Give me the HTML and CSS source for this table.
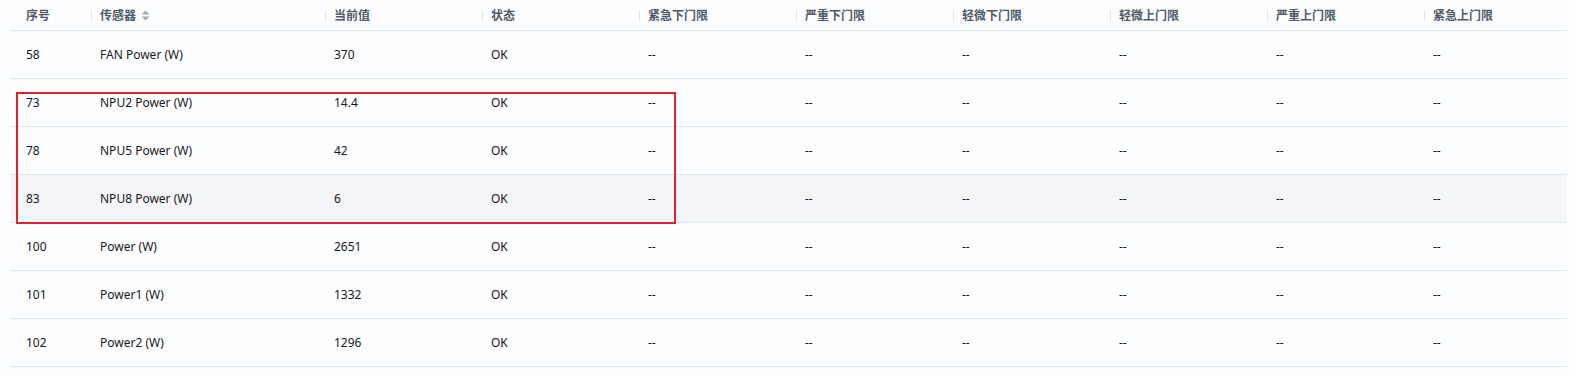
FILE: index.html
```html
<!DOCTYPE html>
<html>
<head>
<meta charset="utf-8">
<link rel="stylesheet" href="styles.css">
</head>
<body>
<div class="wrap">
<table class="grid">
<colgroup>
<col class="c-idx"><col class="c-name"><col class="c-std"><col class="c-std"><col class="c-std"><col class="c-std"><col class="c-std"><col class="c-std"><col class="c-std"><col class="c-last">
</colgroup>
<thead>
<tr>
<th class="first">序号</th>
<th><span class="sep"></span>传感器<svg class="sort" width="9" height="11" viewBox="0 0 9 11"><path d="M4.5 0.5 L8.5 4.5 H0.5 Z" fill="#a5acb7"/><path d="M4.5 10.5 L8.5 6.5 H0.5 Z" fill="#a5acb7"/></svg></th>
<th><span class="sep"></span>当前值</th>
<th><span class="sep"></span>状态</th>
<th><span class="sep"></span>紧急下门限</th>
<th><span class="sep"></span>严重下门限</th>
<th><span class="sep"></span>轻微下门限</th>
<th><span class="sep"></span>轻微上门限</th>
<th><span class="sep"></span>严重上门限</th>
<th><span class="sep"></span>紧急上门限</th>
</tr>
</thead>
<tbody>
<tr><td class="first">58</td><td>FAN Power (W)</td><td>370</td><td>OK</td><td>--</td><td>--</td><td>--</td><td>--</td><td>--</td><td>--</td></tr>
<tr><td class="first">73</td><td>NPU2 Power (W)</td><td>14.4</td><td>OK</td><td>--</td><td>--</td><td>--</td><td>--</td><td>--</td><td>--</td></tr>
<tr><td class="first">78</td><td>NPU5 Power (W)</td><td>42</td><td>OK</td><td>--</td><td>--</td><td>--</td><td>--</td><td>--</td><td>--</td></tr>
<tr class="hover"><td class="first">83</td><td>NPU8 Power (W)</td><td>6</td><td>OK</td><td>--</td><td>--</td><td>--</td><td>--</td><td>--</td><td>--</td></tr>
<tr><td class="first">100</td><td>Power (W)</td><td>2651</td><td>OK</td><td>--</td><td>--</td><td>--</td><td>--</td><td>--</td><td>--</td></tr>
<tr><td class="first">101</td><td>Power1 (W)</td><td>1332</td><td>OK</td><td>--</td><td>--</td><td>--</td><td>--</td><td>--</td><td>--</td></tr>
<tr><td class="first">102</td><td>Power2 (W)</td><td>1296</td><td>OK</td><td>--</td><td>--</td><td>--</td><td>--</td><td>--</td><td>--</td></tr>
</tbody>
</table>
<div class="highlight"></div>
</div>
</body>
</html>
```
FILE: styles.css
```css
html, body {
  margin: 0;
  padding: 0;
  background: #fcfdfe;
}
body {
  font-family: "Noto Sans", "Noto Sans CJK SC", sans-serif;
  font-size: 12px;
  color: #191919;
}
.wrap {
  position: relative;
  padding-left: 10px;
}
.grid {
  border-collapse: collapse;
  table-layout: fixed;
  width: 1557px;
}
.c-idx { width: 81px; }
.c-name { width: 234px; }
.c-std { width: 157px; }
.c-last { width: 143px; }
th {
  position: relative;
  height: 30px;
  padding: 0 0 0 9px;
  text-align: left;
  font-family: "Noto Sans CJK SC", sans-serif;
  font-weight: 700;
  color: #505a68;
  font-size: 12px;
  border-bottom: 1px solid #dfe5ec;
  vertical-align: middle;
  line-height: 16px;
}
th.first, td.first {
  padding-left: 16px;
}
.sep {
  position: absolute;
  left: 0;
  top: 10px;
  width: 1px;
  height: 11px;
  background: #dde2e8;
}
.sort {
  margin-left: 5px;
  vertical-align: -1px;
}
td {
  height: 46px;
  padding: 1px 0 0 9px;
  border-bottom: 1px solid #dfe5ec;
  vertical-align: middle;
  white-space: nowrap;
  line-height: 16px;
}
tr.hover td {
  background: #f4f5f9;
}
.highlight {
  position: absolute;
  left: 16px;
  top: 92px;
  width: 656px;
  height: 128px;
  border: 2px solid #e5202b;
  pointer-events: none;
}
```
